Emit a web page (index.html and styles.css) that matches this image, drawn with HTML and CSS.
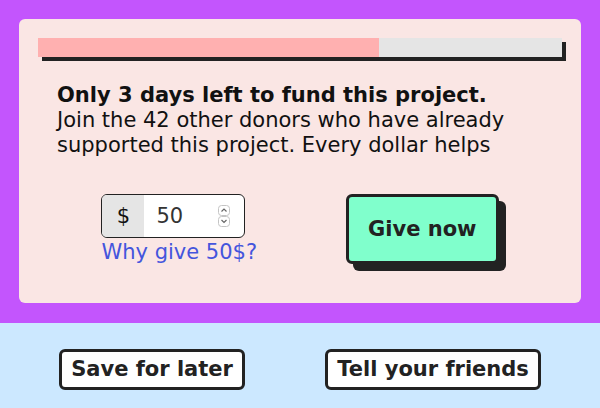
FILE: index.html
```html
<!DOCTYPE html>
<html>
<head>
<meta charset="utf-8">
<link rel="stylesheet" href="styles.css">
</head>
<body>
<section class="hero">
  <div class="card">
    <div class="progress"><div class="progress-fill" style="width:65%"></div></div>
    <div class="message">
      <strong class="headline">Only 3 days left to fund this project.</strong>
      <p class="body">Join the 42 other donors who have already supported this project. Every dollar helps</p>
    </div>
    <div class="donate-row">
      <div class="amount">
        <div class="input-group">
          <span class="addon">$</span>
          <input class="amount-input" type="number" value="50">
          <svg class="spinner" width="14" height="22" viewBox="0 0 14 22" aria-hidden="true">
            <rect x="1.5" y="0.5" width="11" height="10" rx="3" fill="none" stroke="#c4c4c4"/>
            <rect x="1.5" y="11.5" width="11" height="10" rx="3" fill="none" stroke="#c4c4c4"/>
            <path d="M4.5 6.5 L7 4 L9.5 6.5" fill="none" stroke="#666" stroke-width="1.2"/>
            <path d="M4.5 15 L7 17.5 L9.5 15" fill="none" stroke="#666" stroke-width="1.2"/>
          </svg>
        </div>
        <a class="why" href="#">Why give 50$?</a>
      </div>
      <button class="give">Give now</button>
    </div>
  </div>
</section>
<section class="footer">
  <button class="outline">Save for later</button>
  <button class="outline">Tell your friends</button>
</section>
</body>
</html>
```
FILE: styles.css
```css
* { box-sizing: border-box; }
html, body { margin: 0; padding: 0; }
body {
  font-family: "DejaVu Sans", sans-serif;
  font-size: 21px;
  line-height: 25px;
  color: #111;
  background: #cce8ff;
}
.hero {
  background: #c355fd;
  padding: 19px 19px 20px;
}
.card {
  background: #fae6e4;
  border-radius: 6px;
  padding: 19px 19px 38px;
}
.progress {
  height: 19px;
  background: #e5e5e5;
  box-shadow: 4px 4px 0 #222;
  display: flex;
}
.progress-fill {
  background: #ffb0b0;
  height: 100%;
}
.message {
  padding: 26px 19px 0;
}
.headline {
  display: block;
  font-weight: bold;
}
.body {
  margin: 0;
}
.donate-row {
  margin-top: 36px;
  padding: 0 19px;
  display: flex;
  justify-content: space-around;
  align-items: flex-start;
}
.amount {
  display: flex;
  flex-direction: column;
  align-items: flex-start;
}
.input-group {
  display: flex;
  align-items: center;
  width: 144px;
  height: 44px;
  border: 1.5px solid #222;
  border-radius: 6px;
  overflow: hidden;
  background: #fff;
}
.addon {
  width: 42px;
  align-self: stretch;
  background: #e5e5e5;
  display: flex;
  align-items: center;
  justify-content: center;
  color: #111;
}
.amount-input {
  flex: 1;
  min-width: 0;
  align-self: stretch;
  border: 0;
  border-left: 1px solid #fff;
  font: inherit;
  color: #333;
  padding: 0 0 0 11px;
  outline: none;
  background: #fff;
  -moz-appearance: textfield;
}
.amount-input::-webkit-inner-spin-button,
.amount-input::-webkit-outer-spin-button {
  -webkit-appearance: none;
  margin: 0;
}
.spinner {
  flex: none;
  margin-right: 13px;
}
.why {
  color: #4455dd;
  text-decoration: none;
  margin-top: 2px;
}
.give {
  font: inherit;
  font-weight: bold;
  color: #222;
  background: #80ffcc;
  border: 3px solid #222;
  border-radius: 6px;
  padding: 20px 19px 19px;
  box-shadow: 7px 7px 0 #222;
}
.footer {
  padding: 26px 19px 20px;
  display: flex;
  justify-content: space-around;
}
.outline {
  font: inherit;
  font-weight: bold;
  color: #222;
  background: #fff;
  border: 3px solid #222;
  border-radius: 6px;
  padding: 5px 9px;
}
```
